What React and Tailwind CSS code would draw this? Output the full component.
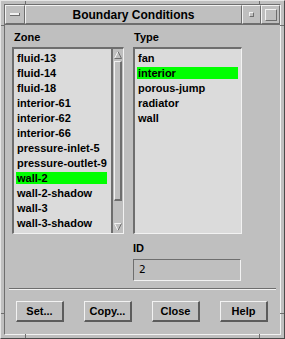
const zones = [
  'fluid-13',
  'fluid-14',
  'fluid-18',
  'interior-61',
  'interior-62',
  'interior-66',
  'pressure-inlet-5',
  'pressure-outlet-9',
  'wall-2',
  'wall-2-shadow',
  'wall-3',
  'wall-3-shadow',
];

const types = ['fan', 'interior', 'porous-jump', 'radiator', 'wall'];

const raised = 'border border-t-[#f2f2f2] border-l-[#f2f2f2] border-b-[#6e6e6e] border-r-[#6e6e6e]';
const sunken = 'border border-t-[#6e6e6e] border-l-[#6e6e6e] border-b-[#f2f2f2] border-r-[#f2f2f2]';

const Row = ({ label, selected }) => (
  <div className="h-[15px]">
    <div
      className={`h-[12px] leading-[12px] pl-[1px] whitespace-nowrap ${
        selected ? 'bg-[#00ff00]' : ''
      }`}
    >
      {label}
    </div>
  </div>
);

const Button = ({ children }) => (
  <button
    type="button"
    className="w-[48px] h-[21px] bg-[#bfbfbf] border-t border-l border-t-[#f2f2f2] border-l-[#f2f2f2] border-b-2 border-r-2 border-b-[#5c5c5c] border-r-[#5c5c5c] text-[11px] font-bold leading-none text-black"
  >
    {children}
  </button>
);

const Mark = ({ className }) => <div className={`absolute ${className}`} />;

export default function App() {
  return (
    <div
      className="relative w-[285px] h-[339px] bg-[#bfbfbf] p-[3px] border border-t-[#e6e6e6] border-l-[#e6e6e6] border-b-[#4a4a4a] border-r-[#4a4a4a] text-black"
      style={{ fontFamily: '"Liberation Sans", Arial, sans-serif' }}
    >
      <div className={`h-full flex flex-col ${sunken}`}>
        {/* title bar */}
        <div className="h-[20px] flex border-b border-b-[#6e6e6e]">
          <div className={`w-[20px] flex items-center justify-center ${raised}`}>
            <div className="w-[10px] h-[3px] bg-[#f2f2f2] border-b border-r border-[#6e6e6e]" />
          </div>
          <div className={`flex-1 flex items-center justify-center text-[12px] font-bold ${raised}`}>
            Boundary Conditions
          </div>
          <div className={`w-[19px] flex items-center justify-center ${raised}`}>
            <div className="w-[5px] h-[5px] bg-[#bfbfbf] border border-t-[#f2f2f2] border-l-[#f2f2f2] border-b-[#6e6e6e] border-r-[#6e6e6e]" />
          </div>
          <div className={`w-[19px] flex items-center justify-center ${raised}`}>
            <div className="w-[12px] h-[12px] bg-[#bfbfbf] border border-t-[#f2f2f2] border-l-[#f2f2f2] border-b-[#6e6e6e] border-r-[#6e6e6e]" />
          </div>
        </div>

        {/* content */}
        <div className="flex-1 flex flex-col pt-[6px] text-[11px] font-bold">
          <div className="flex pl-[7px] gap-[9px]">
            <div className="w-[112px] flex flex-col">
              <div className="h-[13px] leading-[13px] pl-[2px] mb-[3px]">Zone</div>
              <div className="h-[187px] flex border-t-2 border-l-2 border-b border-r border-t-[#6e6e6e] border-l-[#6e6e6e] border-b-[#f2f2f2] border-r-[#f2f2f2]">
                <div className="flex-1 bg-[#dbdbdb] pt-[3px] pl-[2px] pr-[4px]">
                  {zones.map((z) => (
                    <Row key={z} label={z} selected={z === 'wall-2'} />
                  ))}
                </div>
                <div className="w-[13px] flex flex-col border-l-2 border-l-[#6e6e6e] bg-[#bfbfbf]">
                  <div className="h-[12px] flex items-center justify-center">
                    <svg width="8" height="8" viewBox="0 0 8 8">
                      <polygon points="4,0 8,8 0,8" fill="#bfbfbf" stroke="none" />
                      <line x1="4" y1="0.5" x2="0.5" y2="7.5" stroke="#f2f2f2" />
                      <line x1="4" y1="0.5" x2="7.5" y2="7.5" stroke="#6e6e6e" />
                      <line x1="0.5" y1="7.5" x2="7.5" y2="7.5" stroke="#6e6e6e" />
                    </svg>
                  </div>
                  <div className="h-[140px] mx-[1px] border border-t-[#f2f2f2] border-l-[#f2f2f2] border-b-2 border-r-2 border-b-[#6e6e6e] border-r-[#6e6e6e]" />
                  <div className="flex-1" />
                  <div className="h-[12px] flex items-center justify-center">
                    <svg width="8" height="8" viewBox="0 0 8 8">
                      <polygon points="0,0 8,0 4,8" fill="#bfbfbf" stroke="none" />
                      <line x1="0.5" y1="0.5" x2="7.5" y2="0.5" stroke="#f2f2f2" />
                      <line x1="0.5" y1="0.5" x2="4" y2="7.5" stroke="#f2f2f2" />
                      <line x1="7.5" y1="0.5" x2="4" y2="7.5" stroke="#6e6e6e" />
                    </svg>
                  </div>
                </div>
              </div>
            </div>

            <div className="w-[109px] flex flex-col">
              <div className="h-[13px] leading-[13px] pl-[1px] mb-[3px]">Type</div>
              <div className="h-[187px] bg-[#dbdbdb] pt-[3px] pl-[2px] pr-[3px] border-t-2 border-l-2 border-b border-r border-t-[#6e6e6e] border-l-[#6e6e6e] border-b-[#f2f2f2] border-r-[#f2f2f2]">
                {types.map((t) => (
                  <Row key={t} label={t} selected={t === 'interior'} />
                ))}
              </div>
              <div className="h-[13px] leading-[13px] mt-[8px] mb-[4px]">ID</div>
              <div
                className={`h-[22px] w-[108px] flex items-center pl-[5px] text-[11px] font-normal ${sunken}`}
                style={{ fontFamily: '"DejaVu Sans Mono", monospace' }}
              >
                2
              </div>
            </div>
          </div>

          <div className="mt-[7px] mx-[4px] h-[2px] border-t border-t-[#6e6e6e] border-b border-b-[#f2f2f2]" />

          <div className="mt-[11px] pl-[11px] flex gap-[20px]">
            <Button>Set...</Button>
            <Button>Copy...</Button>
            <Button>Close</Button>
            <Button>Help</Button>
          </div>
        </div>
      </div>

      {/* resize corner marks on the frame */}
      <Mark className="top-0 left-[24px] w-[1px] h-[4px] bg-[#6e6e6e]" />
      <Mark className="top-0 left-[258px] w-[1px] h-[4px] bg-[#6e6e6e]" />
      <Mark className="bottom-0 left-[24px] w-[1px] h-[4px] bg-[#6e6e6e]" />
      <Mark className="bottom-0 left-[258px] w-[1px] h-[4px] bg-[#6e6e6e]" />
      <Mark className="left-0 top-[24px] w-[4px] h-[1px] bg-[#6e6e6e]" />
      <Mark className="right-0 top-[24px] w-[4px] h-[1px] bg-[#6e6e6e]" />
      <Mark className="left-0 top-[312px] w-[4px] h-[1px] bg-[#6e6e6e]" />
      <Mark className="right-0 top-[312px] w-[4px] h-[1px] bg-[#6e6e6e]" />
    </div>
  );
}
